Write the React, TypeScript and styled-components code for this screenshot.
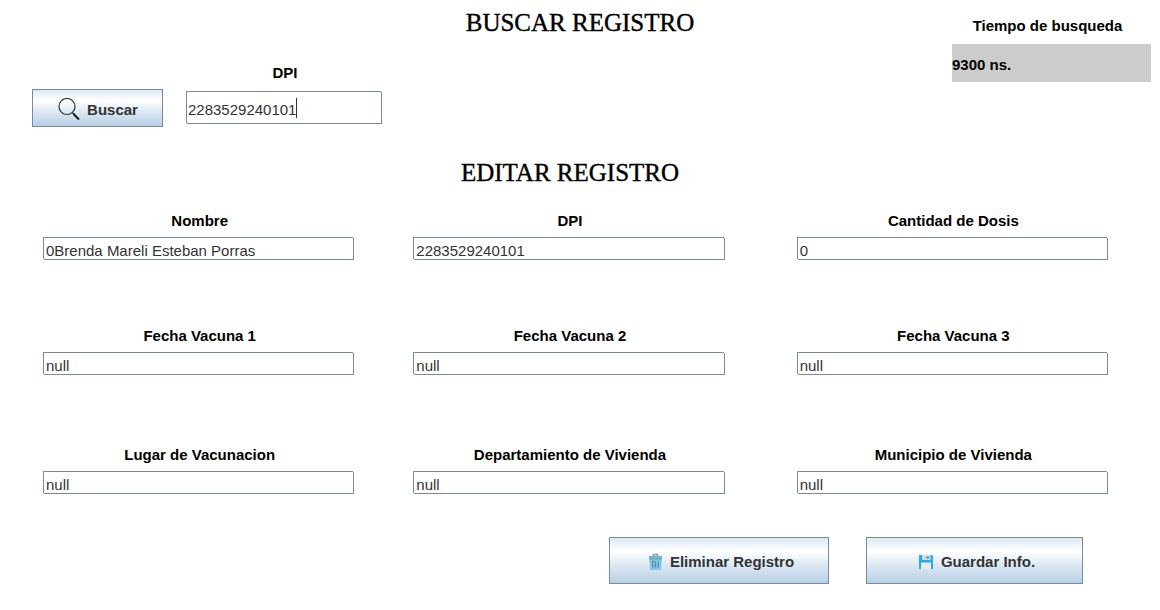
import React, { useState } from "react";
import styled, { createGlobalStyle } from "styled-components";

const line = "#7a8a99";

const GlobalStyle = createGlobalStyle`
  *, *::before, *::after { box-sizing: border-box; }
  body {
    margin: 0;
    background: #fff;
    color: #000;
    font-family: "Liberation Sans", Arial, sans-serif;
    font-size: 15px;
    line-height: 18px;
  }
`;

const Page = styled.main`
  min-width: 900px;
`;

const TopBar = styled.header`
  display: grid;
  grid-template-columns: 1fr auto 1fr;
  padding: 9px 9px 0;
`;

const Title = styled.h1`
  margin: 0;
  font-family: "Liberation Serif", "Times New Roman", serif;
  font-size: 25px;
  font-weight: 400;
  line-height: 28px;
  text-align: center;
  text-transform: uppercase;
  -webkit-text-stroke: 0.4px #000;
`;

const SectionTitle = styled(Title).attrs({ as: "h2" })`
  padding: 32px 20px 0 0;
`;

const SearchForm = styled.form`
  display: flex;
  align-items: flex-end;
  gap: 23px;
  padding: 55px 0 0 23px;
`;

const Button = styled.button`
  display: inline-flex;
  align-items: center;
  justify-content: center;
  gap: 7px;
  height: 47px;
  padding: 2px 0 0 4px;
  border: 1px solid ${line};
  border-radius: 0;
  background: linear-gradient(#dde8f3 0%, #fff 30%, #dde8f3 60%, #b8cfe5 100%);
  color: #333;
  font: inherit;
  font-weight: 700;
  cursor: pointer;
`;

const SearchButton = styled(Button)`
  gap: 6px;
  width: 131px;
  height: 38px;
  padding: 4px 0 0;
`;

const DeleteButton = styled(Button)`
  width: 220px;
`;

const SaveButton = styled(Button)`
  width: 217px;
`;

const Field = styled.div`
  display: flex;
  flex-direction: column;
  gap: 7px;
`;

const SearchField = styled(Field)`
  width: 196px;
  gap: 9px;
  padding-bottom: 3px;
`;

const Label = styled.label`
  padding-left: 2px;
  font-weight: 700;
  text-align: center;
`;

const TextBox = styled.input<{ $height: number }>`
  display: block;
  width: 100%;
  height: ${(p) => p.$height}px;
  padding: 4px 3px 0;
  border: 0;
  border-radius: 0;
  outline: 0;
  background:
    linear-gradient(${line}, ${line}) 0 0 / calc(100% - 1px) 1px no-repeat,
    linear-gradient(${line}, ${line}) 100% 100% / 1px calc(100% - 1px) no-repeat,
    linear-gradient(${line}, ${line}) 100% 100% / calc(100% - 1px) 1px no-repeat,
    linear-gradient(${line}, ${line}) 0 0 / 1px calc(100% - 1px) no-repeat,
    #fff;
  color: #333;
  font: inherit;
`;

const SearchBox = styled(TextBox)`
  padding-left: 2px;
`;

const CaretBox = styled.div`
  position: relative;
`;

const Caret = styled.span`
  position: absolute;
  top: 7px;
  left: 110px;
  width: 1px;
  height: 20px;
  background: #333;
`;

const Timing = styled.section`
  justify-self: end;
  width: 199px;
  padding-top: 8px;
  font-weight: 700;
`;

const TimingLabel = styled.div`
  padding-right: 8px;
  text-align: center;
`;

const TimingValue = styled.output`
  display: flex;
  align-items: center;
  height: 38px;
  margin-top: 9px;
  padding-top: 3px;
  background: #ccc;
`;

const RecordForm = styled.form`
  padding: 25px 52px 26px 43px;
`;

const Fields = styled.div`
  display: grid;
  grid-template-columns: 1fr 59px 1fr 72px 1fr;
  row-gap: 67px;

  > :nth-child(3n + 1) { grid-column: 1; }
  > :nth-child(3n + 2) { grid-column: 3; }
  > :nth-child(3n) { grid-column: 5; }
  > :nth-child(n + 7) { padding-top: 4px; }
`;

const Actions = styled.div`
  display: flex;
  justify-content: flex-end;
  gap: 37px;
  padding: 43px 25px 0 0;
`;

const SearchIcon = () => (
  <svg width="24" height="24" viewBox="0 0 24 24" fill="none" aria-hidden="true">
    <circle cx="10" cy="8.500" r="8" stroke="#333" strokeWidth="1.200" />
    <path d="M15 14.500l2.500 2" stroke="#222" strokeWidth="1.200" />
    <path d="M16.500 16l5.500 5.500" stroke="#111" strokeWidth="2" />
  </svg>
);

const TrashIcon = () => (
  <svg width="15" height="18" viewBox="0 0 15 18" fill="none" aria-hidden="true">
    <path d="M5.500 3V1.500h4V3" stroke="#8e9aa6" strokeWidth="1.400" />
    <path d="M1 3.700h13" stroke="#93a3b0" strokeWidth="1.600" />
    <path d="M1 4.500h13l-1 12.500H2z" fill="#85c6e3" />
    <path d="M1 4.500h13v2H1z" fill="#5fa9cc" />
    <path d="M4.500 8.500l.5 6M7.500 9.500v5M10.500 8.500l-.5 6M4.500 8.500h3" stroke="#4a89aa" strokeWidth="1.200" />
  </svg>
);

const SaveIcon = () => (
  <svg width="16" height="16" viewBox="0 0 16 16" aria-hidden="true">
    <path d="M1 1h13l1 1v13H1z" fill="#29abe8" />
    <path d="M4 1h8.500v5H4z" fill="#c9dde8" />
    <path d="M8.500 2.500h2.500v2H8.500z" fill="#5b8fab" />
    <path d="M3 8.500h10V15H3z" fill="#ececec" />
  </svg>
);

const recordFields = [
  { id: "nombre", label: "Nombre", value: "0Brenda Mareli Esteban Porras" },
  { id: "dpi", label: "DPI", value: "2283529240101" },
  { id: "dosis", label: "Cantidad de Dosis", value: "0" },
  { id: "fecha1", label: "Fecha Vacuna 1", value: "null" },
  { id: "fecha2", label: "Fecha Vacuna 2", value: "null" },
  { id: "fecha3", label: "Fecha Vacuna 3", value: "null" },
  { id: "lugar", label: "Lugar de Vacunacion", value: "null" },
  { id: "departamento", label: "Departamiento de Vivienda", value: "null" },
  { id: "municipio", label: "Municipio de Vivienda", value: "null" },
];

export default function App() {
  const [query, setQuery] = useState("2283529240101");

  return (
    <Page>
      <GlobalStyle />
      <TopBar>
        <SearchForm onSubmit={(e) => e.preventDefault()}>
          <SearchButton type="submit">
            <SearchIcon />
            Buscar
          </SearchButton>
          <SearchField>
            <Label htmlFor="buscar-dpi">DPI</Label>
            <CaretBox>
              <SearchBox
                id="buscar-dpi"
                $height={33}
                value={query}
                onChange={(e) => setQuery(e.target.value)}
              />
              <Caret />
            </CaretBox>
          </SearchField>
        </SearchForm>
        <Title>Buscar Registro</Title>
        <Timing>
          <TimingLabel>Tiempo de busqueda</TimingLabel>
          <TimingValue>9300 ns.</TimingValue>
        </Timing>
      </TopBar>

      <SectionTitle>Editar Registro</SectionTitle>
      <RecordForm onSubmit={(e) => e.preventDefault()}>
        <Fields>
          {recordFields.map((f) => (
            <Field key={f.id}>
              <Label htmlFor={f.id}>{f.label}</Label>
              <TextBox id={f.id} $height={23} defaultValue={f.value} />
            </Field>
          ))}
        </Fields>
        <Actions>
          <DeleteButton type="button">
            <TrashIcon />
            Eliminar Registro
          </DeleteButton>
          <SaveButton type="submit">
            <SaveIcon />
            Guardar Info.
          </SaveButton>
        </Actions>
      </RecordForm>
    </Page>
  );
}
